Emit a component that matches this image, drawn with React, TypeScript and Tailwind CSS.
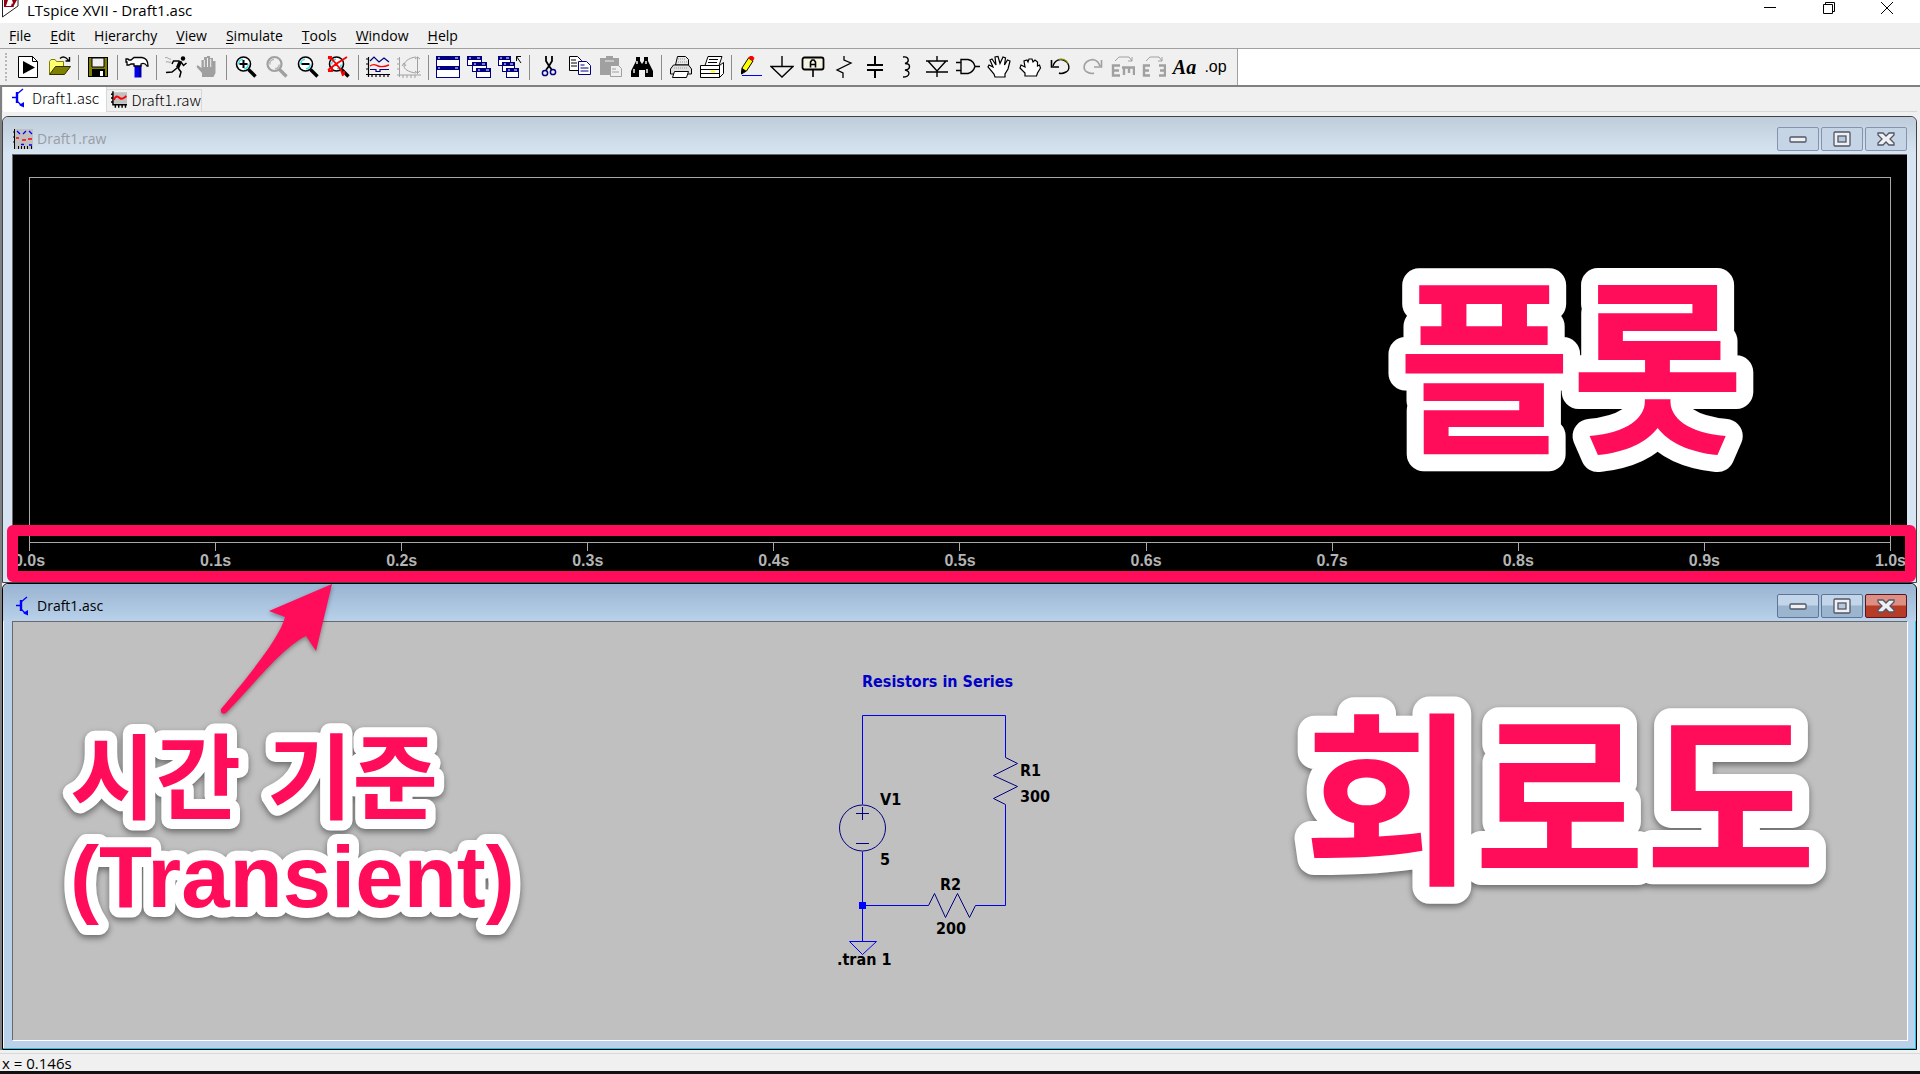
import React from 'react';
import clsx from 'clsx';

type IconProps = { children: React.ReactNode };

const Icon: React.FC<IconProps> = ({ children }) => (
  <svg width="24" height="24" viewBox="0 0 24 24" fill="none" stroke="none" aria-hidden="true">
    {children}
  </svg>
);

const Lens = ({ gray = false }: { gray?: boolean }) => (
  <>
    <path d="M14.5 14.5l7 7" stroke={gray ? '#a0a0a0' : '#000'} strokeWidth="3.4" />
    <circle cx="9.5" cy="9" r="7" fill={gray ? '#f0f0f0' : '#fff'} stroke={gray ? '#a0a0a0' : '#000'} strokeWidth={gray ? 2.2 : 1.6} />
    <path d="M4.8 9.5A4.8 4.8 0 0 1 9 4.2M14.2 9.5A4.8 4.8 0 0 1 10 13.8" stroke={gray ? '#b4b4b4' : '#2fe3ee'} strokeWidth="1.5" />
  </>
);

const MiniWindow = ({ x, y, w = 14, h = 9 }: { x: number; y: number; w?: number; h?: number }) => (
  <>
    <rect x={x + 0.5} y={y + 0.5} width={w} height={h} fill="#fff" stroke="#000080" />
    <rect x={x} y={y} width={w + 1} height="4" fill="#000080" />
    <path d={`M${x + 2} ${y + 2}h2M${x + w - 4} ${y + 2}h3`} stroke="#fff" />
  </>
);

const icons: Record<string, React.ReactNode> = {
  Run: (
    <>
      <path d="M2.5 1.5h14l5 5v16h-19z" fill="#fff" stroke="#000" />
      <path d="M16.5 1.5v5h5" stroke="#000" />
      <path d="M7 6l12 6.5L7 19z" fill="#000" />
    </>
  ),
  Open: (
    <>
      <path d="M2.5 19V6.5l1.5-2h4l1.5 2h7V12" fill="#ffff70" stroke="#808000" />
      <path d="M2.5 19.5l6-8h15l-6 8z" fill="#808000" stroke="#303000" />
      <path d="M13 3.5c2.5-2.5 6-2 8.5 2M22.5 2v4h-4" stroke="#000" strokeWidth="1.4" />
    </>
  ),
  Save: (
    <>
      <rect x="2.5" y="2.5" width="19" height="19" fill="#808000" stroke="#000" />
      <path d="M6 3h12v9H6z" fill="#f0f0f0" stroke="#000" />
      <path d="M6 14h13v8H6z" fill="#000" />
      <path d="M14 16h3v5h-3z" fill="#fff" />
    </>
  ),
  'Control Panel': (
    <>
      <path d="M9.5 10h7v12.5h-7z" fill="#0000f0" />
      <path d="M15 11v11" stroke="#000080" strokeWidth="2" />
      <path d="M1 4h2l1 1h2l3-2.5h8c4 .5 6 4 6 8.5h-1c-2-3-4-3-6-2v2H9V9H6L4 10H2V7H1z" fill="#fff" stroke="#000" strokeWidth="1.3" />
    </>
  ),
  Simulate: (
    <>
      <circle cx="19" cy="3.5" r="2.2" fill="#000" />
      <path d="M16.5 6l-3 7" stroke="#000" strokeWidth="3.4" />
      <path d="M15 6H9.5L8 9M17 7l2.5 3.5 3-2.5M13 13l-5 4-6 .5M14 13l3 4-1.5 5.5" stroke="#000" strokeWidth="1.5" />
      <path d="M1 3c2-2 4 2 6 1M2 7c2-1 3 1 5 0" stroke="#999" />
    </>
  ),
  Halt: (
    <>
      <path d="M7 22v-4l-5.5-6 1-2 4 3V5H9V2h3V1h3v2h3v3h2.5v12l-2 4z" fill="#a0a0a0" />
      <path d="M9.3 5v7M12.5 3v9M15.7 4v8" stroke="#f0f0f0" />
    </>
  ),
  'Zoom In': (
    <>
      <Lens />
      <path d="M5.5 9h8M9.5 5v8" stroke="#000" strokeWidth="2" />
    </>
  ),
  Pan: <Lens gray />,
  'Zoom Out': (
    <>
      <Lens />
      <path d="M5.5 9h8" stroke="#000" strokeWidth="2" />
    </>
  ),
  'Zoom Full': (
    <>
      <Lens />
      <path d="M1 3l4 1 9 11 2 6M20 2L9 9l-8 6M1 2h3v3M1 16h4v-4M17 16v4" stroke="#f00" strokeWidth="1.9" />
    </>
  ),
  'Autorange Y': (
    <>
      <path d="M2.5 2v20M0 4h3M0 9h3M0 14h3M0 19.5h24M6 19v3M10 19v3M14 19v3M18 19v3M22 19v3" stroke="#000" strokeWidth="1.2" />
      <path d="M4 6l4-4 5 5 5-4 5 4M4 14.5h6v2h4v-2h9" stroke="#000080" strokeWidth="1.2" />
      <path d="M4 11c4-3 5-1 8 0s6 1 11-1" stroke="#f00" strokeWidth="1.4" />
    </>
  ),
  'Smith Chart': (
    <path
      d="M2.5 2v20M0 4h3M0 9h3M0 14h3M0 20h24M6 20v3M10 20v3M14 20v3M18 20v3M20.5 2v17M18 4l2.5-2L23 4M18 16l2.5 2 2.5-2M19 2C11 3 7 7 7 11c0 3 4 6 12 7M5 11l2-3 2 3"
      stroke="#a0a0a0"
    />
  ),
  'Tile Windows': (
    <>
      <MiniWindow x={0} y={1} w={23} h={10} />
      <MiniWindow x={0} y={11} w={23} h={11} />
    </>
  ),
  'Cascade Windows': (
    <>
      <MiniWindow x={0} y={1} />
      <MiniWindow x={5} y={7} />
      <MiniWindow x={9} y={13} />
    </>
  ),
  'Close Windows': (
    <>
      <MiniWindow x={0} y={1} w={12} />
      <MiniWindow x={4} y={7} w={12} />
      <MiniWindow x={8} y={13} w={12} />
      <path d="M18.5 6V1.5H23M18.5 1.5L23 8" stroke="#000" />
    </>
  ),
  Cut: (
    <>
      <path d="M9 1v5l3 5 3-5V1M12 11l-3 4M12 11l3 4" stroke="#000" strokeWidth="1.8" />
      <circle cx="8" cy="18" r="2.6" stroke="#000080" strokeWidth="1.5" />
      <circle cx="16" cy="17" r="2.6" stroke="#000080" strokeWidth="1.5" />
    </>
  ),
  Copy: (
    <>
      <path d="M1.5 1.5h8l4 4v10h-12z" fill="#fff" stroke="#000" />
      <path d="M3 5h5M3 8h6M3 11h6" stroke="#000" />
      <path d="M10.5 6.5h8l4 4v9h-12z" fill="#fff" stroke="#000080" />
      <path d="M12.5 10h4M12.5 13h8M12.5 16h8" stroke="#000080" />
    </>
  ),
  Paste: (
    <>
      <path d="M1 3h6V1h7v2h6v17H1z" fill="#a0a0a0" />
      <path d="M6 6h9" stroke="#f0f0f0" />
      <path d="M11.5 10.5h8l3 3v8h-11z" fill="#f0f0f0" stroke="#a0a0a0" />
      <path d="M13 14h4M13 17h7" stroke="#a0a0a0" />
    </>
  ),
  Find: (
    <>
      <path d="M6 2h4v4l2 3 2-3V2h4v4l5 10v6h-8v-7h-6v7H1v-6L6 6z" fill="#000" />
      <path d="M7 6v3M16 6v3M4 14v4M17 14v4" stroke="#fff" strokeWidth="1.4" />
    </>
  ),
  'Print Preview': (
    <>
      <path d="M6.5 10l2-8.5h8l3 3V10z" fill="#e8e8e8" stroke="#000" />
      <path d="M1.5 19v-5l3-4h15l3 4v5z" fill="#e0e0e0" stroke="#000" />
      <path d="M5.5 16.5h14l-2 6h-14z" fill="#fff" stroke="#000" />
      <path d="M9 4h7M9 7h9M5 13h14" stroke="#999" strokeDasharray="1 1" />
    </>
  ),
  Print: (
    <>
      <path d="M5 10.5l3-9h14l-3 9z" fill="#fff" stroke="#000" />
      <path d="M9 4.5h9M8 7.5h9" stroke="#000" />
      <path d="M.5 10.5h19v12H.5zM19.5 10.5l4-3v11l-4 4" fill="#fff" stroke="#000" />
      <path d="M1 14.5h18M1 18.5h18" stroke="#000" />
      <path d="M11 16.5h4" stroke="#ff0" strokeWidth="2" />
    </>
  ),
  Wire: (
    <>
      <path d="M3 13L9.5 3l4.5 3-6.5 10-5 3z" fill="#ff0" stroke="#000" />
      <path d="M9 3l2-2h2.5l2 2L14 6z" fill="#f00" />
      <path d="M2 19l1-6 4.5 3z" fill="#000" />
      <path d="M3 20.5h20" stroke="#00f" />
    </>
  ),
  Ground: <path d="M12 1v10.5M1 11.5h22L12 22z" stroke="#000" strokeWidth="1.4" />,
  'Label Net': (
    <>
      <rect x="1.5" y="2.5" width="21" height="12" rx="2" fill="#f4f4e0" stroke="#000" strokeWidth="1.8" />
      <path d="M12 15v7M9.5 12.5V7L11 5h2l1.5 2v5.5M9.5 9.5h5" stroke="#000" strokeWidth="1.6" />
    </>
  ),
  Resistor: <path d="M12 1v4l7 3L5 15l6 3v5" stroke="#000" strokeWidth="1.3" />,
  Capacitor: <path d="M12 1v8.5M12 15.5V23M4 10h16M4 15h16" stroke="#000" strokeWidth="2" />,
  Inductor: <path d="M9 2c6-1 7 5 2 6.5 6 0 6 6 0 6.500 6 1 5 7-2 7" stroke="#000" strokeWidth="1.4" />,
  Diode: <path d="M12 1v5M1 6h22M3 6l9 10 9-10M1 17h22M12 17v5" stroke="#000" strokeWidth="1.4" />,
  Component: <path d="M5 4.5h7c5 1 6 4 7 7-1 3-3 6-7 7H5zM0 7.5h5M0 15.5h5M19 11.5h5" stroke="#000" strokeWidth="1.4" />,
  Move: (
    <path
      d="M8 22l-1-3-6-7 1-2 4 2L3 5l2-1 4 6L8 2l3-.5 2 7L16 2l2.5 1-1 7 3-5L23 6l-2 8-3 5v3z"
      fill="#fff"
      stroke="#000"
      strokeWidth="1.2"
    />
  ),
  Drag: (
    <path d="M7 21v-3l-5-5 1-3 4 2-1-6 3-1 1 2 1-3h3l1 3 2-2 2.5 2v4l2-1 1 3-3 5-1 3z" fill="#fff" stroke="#000" strokeWidth="1.2" />
  ),
  Undo: (
    <>
      <path d="M4 11c2-6 7-8 12-5s5 9 1 11-5 2-7 1" stroke="#000" strokeWidth="1.4" />
      <path d="M10 4.5c3-1 7 0 9 4" stroke="#808000" strokeWidth="1.4" />
      <path d="M2.5 5v7H10" stroke="#000" strokeWidth="1.6" />
    </>
  ),
  Redo: <path d="M20 11C18 5 13 3 8 6s-5 9-1 11 5 2 7 1M21.5 5v7H14" stroke="#a0a0a0" strokeWidth="1.6" />,
  Rotate: (
    <>
      <path d="M9 10.5H2v10h7M2 15.500h6M11 12.500h13M13 12v8M18 12v6M23 12v8" stroke="#a0a0a0" strokeWidth="2.4" />
      <path d="M4 6l4-4h10l3 4M21 2v4h-4" stroke="#a0a0a0" />
    </>
  ),
  Mirror: (
    <>
      <path d="M8 10.5H2v10h6M2 15.5h5M17 10.5h6v10h-6M23 15.5h-5" stroke="#a0a0a0" strokeWidth="2.4" />
      <path d="M4 6l4-4h9l3 4M20 2v4h-4" stroke="#a0a0a0" />
    </>
  ),
};

const toolbarGroups: string[][] = [
  ['Run', 'Open'],
  ['Save'],
  ['Control Panel'],
  ['Simulate', 'Halt'],
  ['Zoom In', 'Pan', 'Zoom Out', 'Zoom Full'],
  ['Autorange Y', 'Smith Chart'],
  ['Tile Windows', 'Cascade Windows', 'Close Windows'],
  ['Cut', 'Copy', 'Paste', 'Find'],
  ['Print Preview', 'Print'],
  ['Wire', 'Ground', 'Label Net', 'Resistor', 'Capacitor', 'Inductor', 'Diode', 'Component', 'Move', 'Drag', 'Undo', 'Redo', 'Rotate', 'Mirror', 'Text', 'Directive'],
];

const menus: [string, string, string][] = [
  ['', 'F', 'ile'],
  ['', 'E', 'dit'],
  ['H', 'i', 'erarchy'],
  ['', 'V', 'iew'],
  ['', 'S', 'imulate'],
  ['', 'T', 'ools'],
  ['', 'W', 'indow'],
  ['', 'H', 'elp'],
];

const ticks = ['0.0s', '0.1s', '0.2s', '0.3s', '0.4s', '0.5s', '0.6s', '0.7s', '0.8s', '0.9s', '1.0s'];

const SchematicIcon = () => (
  <svg width="14" height="20" viewBox="0 0 14 20" fill="none" aria-hidden="true">
    <path d="M0 9.5h4M11 1L5 6v7l5 5" stroke="#00f" strokeWidth="1.3" />
    <path d="M5 4v11" stroke="#00f" strokeWidth="2.4" />
    <path d="M7 17l5 2.5V14z" fill="#00f" />
  </svg>
);

const WaveIcon = () => (
  <svg width="17" height="17" viewBox="0 0 17 17" fill="none" aria-hidden="true">
    <path d="M2 1h15v12H2z" fill="#c0c0c0" />
    <path d="M2 0v14h15M0 3h2M0 7h2M0 11h2M4.5 14v3M8 14v3M11.5 14v3M15 14v3" stroke="#000" strokeWidth="1.5" />
    <path d="M3 9c2-5 4-4 6-2s4 0 7-2" stroke="#f00" strokeWidth="2" />
  </svg>
);

const RawIcon = () => (
  <svg width="20" height="20" viewBox="0 0 20 20" fill="none" aria-hidden="true">
    <path d="M2 0h18v20H2z" fill="#c0c0c0" />
    <path d="M1.5 0v20M0 3h2M0 8h2M0 13h2M5.5 17v3M8.5 17v3M11.5 17v3M14.5 17v3M18.5 17v3" stroke="#000" />
    <path d="M4 2l3 3M10 5l3-3M16 2l3 3M8 15.5h3M16 16h3" stroke="#00f" strokeWidth="1.3" />
    <path d="M3 9h3M9 11h4M15 10h4" stroke="#f00" strokeWidth="1.6" />
  </svg>
);

const captionGlyphs: Record<string, React.ReactNode> = {
  Minimize: <rect x="4" y="10" width="16" height="5" rx="1" />,
  Maximize: (
    <>
      <rect x="4" y="5" width="16" height="14" rx="1" />
      <rect x="8" y="9" width="8" height="6" fill="#b7c9dc" />
    </>
  ),
  Close: <path d="M4 6h5l3 3 3-3h5v2l-4 4 4 4v2h-5l-3-3-3 3H4v-2l4-4-4-4z" />,
};

type ChildWindowProps = {
  title: string;
  icon: React.ReactNode;
  active?: boolean;
  children: React.ReactNode;
};

const ChildWindow: React.FC<ChildWindowProps> = ({ title, icon, active, children }) => (
  <section
    className={clsx(
      'relative flex grow basis-0 flex-col rounded-t-md border px-[9px] pb-[9px]',
      active ? 'border-black bg-[#b9d1ea] shadow-[inset_-1px_-1px_0_#1cc8e0,inset_1px_1px_0_#f4faff]' : 'border-[#404448] bg-[#d7e4f2]'
    )}
  >
    <header
      className={clsx(
        '-mx-[9px] flex h-[37px] items-end justify-between rounded-t-md px-[9px] pb-[3px]',
        active ? 'bg-linear-to-b from-[#99b4d1] to-[#b9d1ea]' : 'bg-linear-to-b from-[#bfcddb] to-[#d7e4f2]'
      )}
    >
      <h2 className={clsx('flex h-6 items-center gap-1 pl-px text-sm', active ? 'text-black' : 'text-[#999da3]')}>
        <span className="flex w-5 justify-center">{icon}</span>
        {title}
      </h2>
      <div className="flex gap-0.5">
        {Object.entries(captionGlyphs).map(([name, glyph]) => (
          <button
            key={name}
            aria-label={name}
            className={clsx(
              'flex h-6 w-[42px] items-center justify-center rounded-xs border',
              !active && 'border-[#8593b0] bg-[#c6d5e5]',
              active && name !== 'Close' && 'border-[#5d7596] bg-linear-to-b from-[#c3d5e8] from-45% to-[#9bb5cf] to-50%',
              active && name === 'Close' && 'border-[#5a1420] bg-linear-to-b from-[#dd8f84] from-45% to-[#b83c25] to-50%'
            )}
          >
            <svg width="24" height="24" viewBox="0 0 24 24" fill="#f0f0f0" stroke="#50566a" strokeWidth="1.3" aria-hidden="true">
              {glyph}
            </svg>
          </button>
        ))}
      </div>
    </header>
    {children}
  </section>
);

type CalloutLine = { text: string; size: number; y: number };
type CalloutProps = { lines: CalloutLine[]; outline: number; className: string };

const Callout: React.FC<CalloutProps> = ({ lines, outline, className }) => (
  <svg
    className={clsx('absolute overflow-visible font-bold drop-shadow-[0_3px_3px_rgba(0,0,0,0.45)]', className)}
    fill="#ff0d5b"
    stroke="#fff"
    strokeWidth={outline * 2}
    strokeLinejoin="round"
    paintOrder="stroke"
  >
    {lines.map(({ text, size, y }) => (
      <text key={text} x="0" y={y} fontSize={size}>
        {text}
      </text>
    ))}
  </svg>
);

const Schematic = () => (
  <svg
    className="absolute top-[42px] left-[823px] font-['DejaVu_Sans_Condensed','DejaVu_Sans',sans-serif] font-bold"
    width="230"
    height="320"
    viewBox="836 664 230 320"
    fill="none"
    strokeWidth="1"
    fontSize="16"
  >
    <path
      d="M862.5 804.5V715.5H1005.5V757.5M1005.5 804.5V905.5H975.5M928.5 905.5H862.5M862.5 851.5V941.5M849.5 941.5H876.5L862.5 954.5Z"
      stroke="#0000f0"
    />
    <path
      d="M1005.5 757.5l12 6-24 12 24 11-24 12 12 6M928.5 905.5l6-12 11 24 12-24 12 24 6-12M856 813.5h13M862.5 807v13M856 843.5h13"
      stroke="#000080"
    />
    <circle cx="862.5" cy="828" r="23" stroke="#000080" />
    <path d="M859 902h7v7h-7z" fill="#00f" />
    <text x="862" y="687" fill="#0000c8">Resistors in Series</text>
    <g fill="#000">
      <text x="880" y="805">V1</text>
      <text x="880" y="865">5</text>
      <text x="1020" y="776">R1</text>
      <text x="1020" y="802">300</text>
      <text x="940" y="890">R2</text>
      <text x="936" y="934">200</text>
      <text x="837" y="965">.tran 1</text>
    </g>
  </svg>
);

const App: React.FC = () => {
  return (
    <div className="flex min-h-screen flex-col bg-[#f0f0f0] font-['Open_Sans','Noto_Sans_CJK_KR',sans-serif] text-sm text-black">
      <header className="flex h-[23px] items-start justify-between bg-white">
        <h1 className="flex items-start gap-2 text-[15px] leading-5">
          <svg width="19" height="18" viewBox="0 0 19 18" aria-hidden="true">
            <path d="M2.5 0v17L18 6V0" fill="#fff" stroke="#222" />
            <path d="M4 0h4L6 6h5l1-3 2 4H4zM12 0h5l-4 7h-2l2-4z" fill="#900010" />
          </svg>
          LTspice XVII - Draft1.asc
        </h1>
        <div className="flex">
          <button aria-label="Minimize application" className="flex w-[60px] justify-center">
            <svg width="14" height="16" viewBox="0 0 14 16" fill="none"><path d="M1 7.5h12" stroke="#000" /></svg>
          </button>
          <button aria-label="Restore application" className="flex w-[58px] justify-center">
            <svg width="14" height="16" viewBox="0 0 14 16" fill="none" stroke="#000"><path d="M1.5 4.5h9v9h-9zM3.5 4V2.5h9v9H11" /></svg>
          </button>
          <button aria-label="Close application" className="mr-1 flex w-[58px] justify-center">
            <svg width="14" height="16" viewBox="0 0 14 16" fill="none" stroke="#000"><path d="M1 2l12 12M13 2L1 14" /></svg>
          </button>
        </div>
      </header>

      <nav className="flex h-[26px] items-center gap-[19px] border-b border-[#a0a0a0] px-[9px]">
        {menus.map(([before, key, after]) => (
          <button key={before + key + after}>
            {before}
            <span className="underline underline-offset-2">{key}</span>
            {after}
          </button>
        ))}
      </nav>

      <div className="flex h-[38px] border-b-2 border-[#808080] bg-white">
        <div role="toolbar" aria-label="Main" className="flex items-center border-r border-[#a0a0a0] bg-[#f0f0f0] pr-[6px]">
          <div className="mx-[5px] h-7 w-[2px] border-l-2 border-dotted border-[#b8b8b8]" />
          {toolbarGroups.map((group, i) => (
            <React.Fragment key={group[0]}>
              {i > 0 && (
                <div className="flex w-2 justify-center">
                  <div className="h-[25px] w-px bg-[#8c8c8c]" />
                </div>
              )}
              {group.map((name) => (
                <button key={name} aria-label={name} className="flex h-6 w-[31px] items-center justify-center">
                  {icons[name] && <Icon>{icons[name]}</Icon>}
                  {name === 'Text' && (
                    <span className="font-['Liberation_Serif',serif] text-xl leading-6 font-bold italic">Aa</span>
                  )}
                  {name === 'Directive' && <span className="font-['Liberation_Sans',sans-serif] text-base leading-6">.op</span>}
                </button>
              ))}
            </React.Fragment>
          ))}
        </div>
      </div>

      <main className="flex flex-1 flex-col border-l-2 border-[#808080] pr-[3px]">
        <div role="tablist" className="flex h-[29px] shrink-0 items-start font-['Noto_Sans_CJK_KR',sans-serif] text-[15px] leading-5 font-light">
          <div className="flex h-[25px] w-full border-b border-[#d8d8d8] pl-px">
            <button
              role="tab"
              aria-selected="true"
              className="flex h-[25px] w-[104px] items-center gap-1.5 border-r border-[#d8d8d8] bg-white pb-[3px] pl-[9px]"
            >
              <SchematicIcon />
              Draft1.asc
            </button>
            <button
              role="tab"
              aria-selected="false"
              className="mt-0.5 flex h-[22px] w-[95px] items-center gap-1 border-t border-r border-[#d8d8d8] pb-0.5 pl-1"
            >
              <WaveIcon />
              Draft1.raw
            </button>
          </div>
        </div>

        <ChildWindow title="Draft1.raw" icon={<RawIcon />}>
          <div className="relative flex flex-1 flex-col overflow-hidden border-t border-l border-[#696969] bg-black px-4 pt-[22px] pb-0.5">
            <div className="flex-1 border border-[#a8a8a8]" />
            <div className="flex h-7 justify-between">
              {ticks.map((t) => (
                <div key={t} className="flex w-px flex-col items-center">
                  <div className="h-2 w-px shrink-0 bg-[#a8a8a8]" />
                  <span className="font-['Liberation_Sans',sans-serif] text-base leading-5 font-bold text-[#b4b4b4]">{t}</span>
                </div>
              ))}
            </div>
            <Callout
              lines={[{ text: '플롯', size: 188, y: 188 }]}
              outline={17}
              className="top-[95px] right-[169px] h-60 w-[340px] font-['Noto_Sans_CJK_KR',sans-serif]"
            />
          </div>
          <div className="absolute right-0 bottom-0 left-1 h-[57px] rounded-md border-11 border-[#ff0d5b]" />
        </ChildWindow>

        <ChildWindow title="Draft1.asc" icon={<SchematicIcon />} active>
          <div className="relative flex-1 border-t border-l border-[#696969] bg-[#c0c0c0] shadow-[1px_1px_0_#fff]">
            <svg
              className="absolute top-[-39px] left-[199px] drop-shadow-[0_2px_2px_rgba(0,0,0,0.35)]"
              width="130"
              height="136"
              viewBox="212 583 130 136"
              fill="#ff0d5b"
              aria-hidden="true"
            >
              <path d="M332 584L269 611l16 6c-5 20-34 56-64 92-1 4 2 6 5 4 31-32 56-65 80-77l10 15z" />
            </svg>
            <Callout
              lines={[
                { text: '시간 기준', size: 93, y: 92 },
                { text: '(Transient)', size: 87, y: 187 },
              ]}
              outline={10}
              className="top-[98px] left-[57px] h-60 w-[460px] font-['Liberation_Sans','Noto_Sans_CJK_KR',sans-serif]"
            />
            <Schematic />
            <Callout
              lines={[{ text: '회로도', size: 186, y: 186 }]}
              outline={17}
              className="top-[62px] right-[91px] h-60 w-[513px] font-['Noto_Sans_CJK_KR',sans-serif]"
            />
          </div>
        </ChildWindow>
      </main>

      <footer className="mt-[3px] flex h-[21px] items-center border-t border-b-3 border-t-[#d8d8d8] border-b-[#101010] px-0.5 pt-0.5 text-[15px]">
        x = 0.146s
      </footer>
    </div>
  );
};

export default App;
